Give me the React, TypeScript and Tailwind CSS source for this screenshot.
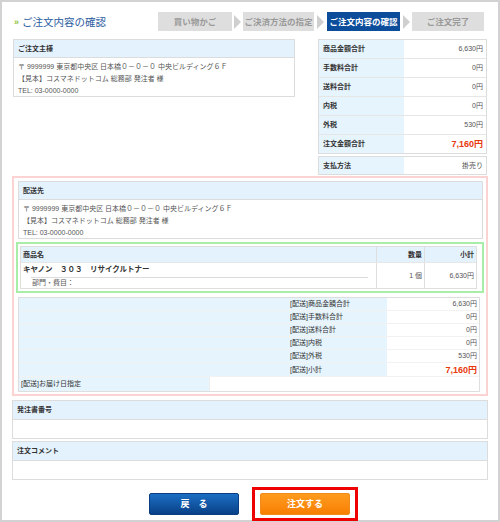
import React from "react";

const steps = [
  { label: "買い物かご", w: "w-[74px]", gap: "", active: false },
  { label: "ご決済方法の指定", w: "w-[71px]", gap: "w-[11px]", active: false },
  { label: "ご注文内容の確認", w: "w-[73px]", gap: "w-[13px]", active: true },
  { label: "ご注文完了", w: "w-[72px]", gap: "w-[12px]", active: false },
];

const totals = [
  { label: "商品金額合計", value: "6,630円" },
  { label: "手数料合計", value: "0円" },
  { label: "送料合計", value: "0円" },
  { label: "内税", value: "0円" },
  { label: "外税", value: "530円" },
];

const shipTotals = [
  { label: "[配送]商品金額合計", value: "6,630円" },
  { label: "[配送]手数料合計", value: "0円" },
  { label: "[配送]送料合計", value: "0円" },
  { label: "[配送]内税", value: "0円" },
  { label: "[配送]外税", value: "530円" },
];

function Arrow({ w }: { w: string }) {
  return (
    <div className={`${w} h-[19px] flex items-center justify-center`}>
      <div className="w-0 h-0 border-y-[7px] border-y-transparent border-l-[7px] border-l-[#cfcfcf]" />
    </div>
  );
}

function Address() {
  return (
    <div className="px-[4px] pt-[3px] pb-[2px] leading-[12px]">
      <div>〒 9999999 東京都中央区 日本橋０－０－０ 中央ビルディング６Ｆ</div>
      <div>【見本】コスマネドットコム 総務部 発注者 様</div>
      <div>TEL: 03-0000-0000</div>
    </div>
  );
}

export default function App() {
  return (
    <div className="w-[500px] h-[522px] border-2 border-[#d2d2d2] bg-white px-[10px] text-[7px] leading-[10px] text-[#555] font-['Liberation_Sans','Noto_Sans_CJK_JP',sans-serif]">
      {/* Title + steps */}
      <div className="flex items-center justify-between pt-[10px]">
        <div className="flex items-center ml-[2px]">
          <span className="text-[9px] text-[#8cc63f] font-bold">»</span>
          <span className="ml-[3px] text-[10.5px] leading-[14px] text-[#2c5d9f]">ご注文内容の確認</span>
        </div>
        <div className="flex items-center mr-[4px]">
          {steps.map((s, i) => (
            <React.Fragment key={s.label}>
              {i > 0 && <Arrow w={s.gap} />}
              <div
                className={`${s.w} h-[19px] flex items-center justify-center text-[8.5px] font-bold ${
                  s.active ? "bg-[#0b4c9b] text-white" : "bg-[#dedede] text-[#999]"
                }`}
              >
                {s.label}
              </div>
            </React.Fragment>
          ))}
        </div>
      </div>

      {/* Orderer + totals */}
      <div className="flex mt-[8px]">
        <div className="ml-[1px] w-[282px] h-[58px] border border-[#dcdcdc]">
          <div className="h-[18px] bg-[#e4f2fd] border-b border-[#dcdcdc] flex items-center px-[4px] font-bold text-[#333]">
            ご注文主様
          </div>
          <Address />
        </div>
        <div className="ml-auto mr-[1px] w-[169px]">
          <div className="border border-[#dcdcdc]">
            {totals.map((t) => (
              <div key={t.label} className="flex h-[19px] border-b border-[#e6e6e6]">
                <div className="w-[85px] bg-[#e6f4fd] flex items-center pl-[4px] font-bold text-[#333]">{t.label}</div>
                <div className="flex-1 flex items-center justify-end pr-[3px]">{t.value}</div>
              </div>
            ))}
            <div className="flex h-[18px]">
              <div className="w-[85px] bg-[#e6f4fd] flex items-center pl-[4px] font-bold text-[#333]">注文金額合計</div>
              <div className="flex-1 flex items-center justify-end pr-[3px] text-[9px] font-bold text-[#e8380d]">7,160円</div>
            </div>
          </div>
          <div className="mt-[2px] border border-[#dcdcdc] flex h-[19px]">
            <div className="w-[85px] bg-[#e6f4fd] flex items-center pl-[4px] font-bold text-[#333]">支払方法</div>
            <div className="flex-1 flex items-center justify-end pr-[3px]">掛売り</div>
          </div>
        </div>
      </div>

      {/* Shipping block */}
      <div className="mt-[1px] border-2 border-[#fcd3d3] pt-[3px] pb-[2px]">
        <div className="ml-[4px] mr-[3px] h-[58px] border border-[#dcdcdc]">
          <div className="h-[18px] bg-[#e4f2fd] border-b border-[#dcdcdc] flex items-center px-[4px] font-bold text-[#333]">
            配送先
          </div>
          <Address />
        </div>

        <div className="mt-[3px] mx-[2px] border-2 border-[#a8eea8] pl-[2px] pr-[5px] py-[2px]">
          <div className="border border-[#dedede]">
            <div className="flex h-[15px] bg-[#e4f2fd] font-bold text-[#333]">
              <div className="w-[356px] flex items-center pl-[2px] border-r border-[#dedede]">商品名</div>
              <div className="w-[48px] flex items-center justify-end pr-[2px] border-r border-[#dedede]">数量</div>
              <div className="flex-1 flex items-center justify-end pr-[2px]">小計</div>
            </div>
            <div className="flex h-[26px] border-t border-[#e6e6e6]">
              <div className="w-[356px] border-r border-[#dedede] pl-[2px]">
                <div className="h-[14px] flex items-center font-bold text-[#333] text-[7.5px]">
                  キヤノン　３０３　リサイクルトナー
                </div>
                <div className="ml-[8px] mr-[8px] border-t border-[#dcdcdc]" />
                <div className="pl-[9px] h-[10px] flex items-center">部門・費目：</div>
              </div>
              <div className="w-[48px] flex items-center justify-end pr-[2px] border-r border-[#dedede]">1 個</div>
              <div className="flex-1 flex items-center justify-end pr-[2px]">6,630円</div>
            </div>
          </div>
        </div>

        <div className="mt-[4px] ml-[4px] mr-[6px] border border-[#dedede]">
          {shipTotals.map((t) => (
            <div key={t.label} className="flex h-[13px] border-b border-[#f2f2f2]">
              <div className="w-[368px] bg-[#e6f4fd] flex items-center pl-[271px] text-[#333]">{t.label}</div>
              <div className="flex-1 flex items-center justify-end pr-[2px]">{t.value}</div>
            </div>
          ))}
          <div className="flex h-[14px] border-b border-[#f2f2f2]">
            <div className="w-[368px] bg-[#e6f4fd] flex items-center pl-[271px] text-[#333]">[配送]小計</div>
            <div className="flex-1 flex items-center justify-end pr-[2px] text-[9px] font-bold text-[#e8380d]">7,160円</div>
          </div>
          <div className="flex h-[14px]">
            <div className="w-[191px] bg-[#e6f4fd] flex items-center pl-[2px] text-[#333] border-r border-[#ececec]">[配送]お届け日指定</div>
            <div className="flex-1" />
          </div>
        </div>
      </div>

      {/* Purchase order number */}
      <div className="mt-[4px] border border-[#dcdcdc]">
        <div className="h-[19px] bg-[#e4f2fd] border-b border-[#dcdcdc] flex items-center px-[4px] font-bold text-[#333]">
          発注書番号
        </div>
        <div className="h-[18px]" />
      </div>

      {/* Comment */}
      <div className="mt-[2px] border border-[#dcdcdc]">
        <div className="h-[19px] bg-[#e4f2fd] border-b border-[#dcdcdc] flex items-center px-[4px] font-bold text-[#333]">
          注文コメント
        </div>
        <div className="h-[18px]" />
      </div>

      {/* Buttons */}
      <div className="flex items-center mt-[7px] ml-[137px] gap-[13px]">
        <button className="w-[90px] h-[22px] rounded-[2px] border border-[#0a3e80] bg-gradient-to-b from-[#1c6fc4] to-[#0a4188] text-white text-[9px] font-bold">
          戻　る
        </button>
        <div className="border-[3px] border-[#ee0000] px-[5px] py-[3px]">
          <button className="w-[90px] h-[22px] rounded-[2px] border border-[#f08a1a] bg-gradient-to-b from-[#ff9b1e] to-[#f77f00] text-white text-[9px] font-bold">
            注文する
          </button>
        </div>
      </div>
    </div>
  );
}
